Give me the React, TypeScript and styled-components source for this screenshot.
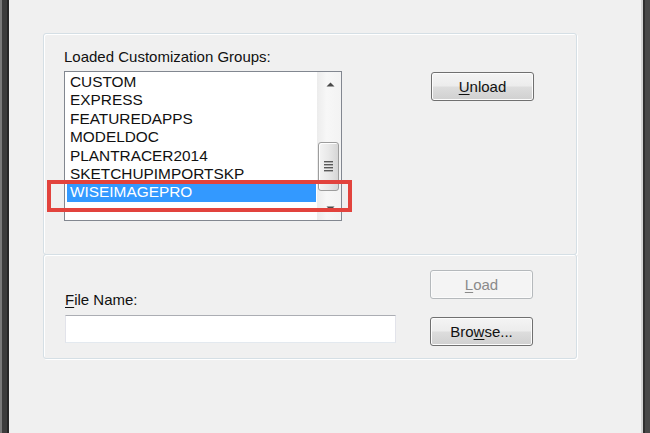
import React from "react";
import styled, { createGlobalStyle } from "styled-components";

const GlobalStyle = createGlobalStyle`
  html, body {
    margin: 0;
    padding: 0;
    background: #f0f0f0;
  }
  body {
    font-family: "Liberation Sans", Arial, sans-serif;
    font-size: 15px;
    color: #000;
  }
`;

const Window = styled.div`
  display: flex;
  width: 650px;
  height: 433px;
  overflow: hidden;
  background: #f0f0f0;
`;

const LeftFrame = styled.div`
  width: 9px;
  flex: none;
  background: linear-gradient(
    to right,
    #7a7a7a 0 2px,
    #3c3c3c 2px 7px,
    #262626 7px 9px
  );
`;

const RightFrame = styled.div`
  width: 9px;
  flex: none;
  background: linear-gradient(
    to right,
    #d2d2d2 0 2px,
    #2e2e2e 2px 4px,
    #474747 4px 9px
  );
`;

const Content = styled.div`
  flex: 1;
  padding: 33px 0 0 34px;
`;

const GroupBox = styled.div<{ $height: number }>`
  box-sizing: border-box;
  width: 534px;
  height: ${(p) => p.$height}px;
  border: 1px solid #d5dfe5;
  border-radius: 3px;
  box-shadow: inset 1px 1px 0 #ffffff, 1px 1px 0 #ffffff;
  & + & {
    margin-top: -1px;
  }
`;

const TopGroup = styled(GroupBox)`
  display: flex;
  align-items: flex-start;
  padding: 14px 0 0 20px;
`;

const BottomGroup = styled(GroupBox)`
  display: flex;
  align-items: flex-end;
  padding: 0 0 12px 21px;
`;

const ListColumn = styled.div`
  display: flex;
  flex-direction: column;
  width: 278px;
`;

const Label = styled.div`
  line-height: 18px;
  height: 18px;
  white-space: nowrap;
  color: #111111;
  u {
    text-decoration-thickness: 1px;
    text-underline-offset: 2px;
  }
`;

const ListLabel = styled(Label)`
  margin-bottom: 5px;
`;

const ListWrap = styled.div`
  position: relative;
`;

const ListBox = styled.div`
  box-sizing: border-box;
  display: flex;
  width: 278px;
  height: 150px;
  border: 1px solid #828790;
  background: #ffffff;
`;

const Items = styled.div`
  flex: 1;
  padding: 1px 1px 0 2px;
  overflow: hidden;
`;

const Item = styled.div<{ $selected?: boolean }>`
  height: 18.4px;
  line-height: 18.4px;
  padding-left: 3px;
  font-size: 15.4px;
  white-space: nowrap;
  color: ${(p) => (p.$selected ? "#ffffff" : "#111111")};
  background: ${(p) => (p.$selected ? "#3399ff" : "transparent")};
`;

const ScrollBar = styled.div`
  width: 24px;
  display: flex;
  flex-direction: column;
  background: linear-gradient(to right, #ececec, #f7f7f7 40%, #f3f3f3);
`;

const ArrowButton = styled.div`
  height: 24px;
  display: flex;
  align-items: center;
  justify-content: center;
  padding-left: 2px;
  flex: none;
`;

const Track = styled.div<{ $offset: number }>`
  flex: 1;
  padding: ${(p) => p.$offset}px 2px 0 1px;
`;

const Thumb = styled.div<{ $length: number }>`
  box-sizing: border-box;
  height: ${(p) => p.$length}px;
  border: 1px solid #9d9d9d;
  border-radius: 3px;
  background: linear-gradient(to right, #f4f4f4, #e8e8e8 50%, #d6d6d6);
  box-shadow: inset 1px 1px 0 #ffffff;
  display: flex;
  align-items: center;
  justify-content: center;
`;

const Highlight = styled.div`
  position: absolute;
  left: -17px;
  top: 109px;
  width: 305px;
  height: 32px;
  box-sizing: border-box;
  border: 4px solid #e2433d;
  pointer-events: none;
`;

const ButtonColumn = styled.div<{ $gap?: number }>`
  display: flex;
  flex-direction: column;
  gap: ${(p) => p.$gap ?? 0}px;
`;

const UnloadColumn = styled(ButtonColumn)`
  margin-left: 89px;
  margin-top: 24px;
`;

const FileColumn = styled.div`
  display: flex;
  flex-direction: column;
  width: 331px;
  margin-right: 34px;
  margin-bottom: 3px;
`;

const FileLabel = styled(Label)`
  margin-bottom: 6px;
`;

const TextInput = styled.div`
  box-sizing: border-box;
  height: 28px;
  background: #ffffff;
  border: 1px solid #e2e3ea;
  border-top-color: #abadb3;
  border-bottom-color: #e3e9ef;
`;

const Button = styled.div<{ $disabled?: boolean }>`
  box-sizing: border-box;
  width: 103px;
  height: 29px;
  display: flex;
  align-items: center;
  justify-content: center;
  border-radius: 3px;
  border: 1px solid ${(p) => (p.$disabled ? "#b5b9bc" : "#707070")};
  color: ${(p) => (p.$disabled ? "#8a8a8a" : "#111111")};
  background: ${(p) =>
    p.$disabled
      ? "#f4f4f4"
      : "linear-gradient(to bottom, #f4f4f4 0%, #ececec 48%, #dddddd 52%, #d0d0d0 100%)"};
  box-shadow: inset 0 0 0 1px ${(p) => (p.$disabled ? "#fbfbfb" : "#fcfcfc")};
  u {
    text-decoration-thickness: 1px;
    text-underline-offset: 2px;
  }
`;

const UpArrow = () => (
  <svg width="9" height="5" viewBox="0 0 9 5">
    <path d="M0.5 4.5 L4.5 0.5 L8.5 4.5 Z" fill="#4a4a4a" />
  </svg>
);

const DownArrow = () => (
  <svg width="9" height="5" viewBox="0 0 9 5">
    <path d="M0.5 0.5 L4.5 4.5 L8.5 0.5 Z" fill="#4a4a4a" />
  </svg>
);

const Grip = () => (
  <svg width="9" height="11" viewBox="0 0 9 11">
    {[1, 4, 7, 10].map((y) => (
      <rect key={y} x="0" y={y - 1} width="9" height="1.4" fill="#5a5a5a" />
    ))}
  </svg>
);

const groups = [
  "CUSTOM",
  "EXPRESS",
  "FEATUREDAPPS",
  "MODELDOC",
  "PLANTRACER2014",
  "SKETCHUPIMPORTSKP",
  "WISEIMAGEPRO",
];

const selected = "WISEIMAGEPRO";

export default function App() {
  return (
    <>
      <GlobalStyle />
      <Window>
        <LeftFrame />
        <Content>
          <TopGroup $height={222}>
            <ListColumn>
              <ListLabel>Loaded Customization Groups:</ListLabel>
              <ListWrap>
                <ListBox>
                  <Items>
                    {groups.map((g) => (
                      <Item key={g} $selected={g === selected}>
                        {g}
                      </Item>
                    ))}
                  </Items>
                  <ScrollBar>
                    <ArrowButton>
                      <UpArrow />
                    </ArrowButton>
                    <Track $offset={46}>
                      <Thumb $length={49}>
                        <Grip />
                      </Thumb>
                    </Track>
                    <ArrowButton>
                      <DownArrow />
                    </ArrowButton>
                  </ScrollBar>
                </ListBox>
                <Highlight />
              </ListWrap>
            </ListColumn>
            <UnloadColumn>
              <Button>
                <span>
                  <u>U</u>nload
                </span>
              </Button>
            </UnloadColumn>
          </TopGroup>
          <BottomGroup $height={105}>
            <FileColumn>
              <FileLabel>
                <u>F</u>ile Name:
              </FileLabel>
              <TextInput />
            </FileColumn>
            <ButtonColumn $gap={18}>
              <Button $disabled>
                <span>
                  <u>L</u>oad
                </span>
              </Button>
              <Button>
                <span>
                  Bro<u>w</u>se...
                </span>
              </Button>
            </ButtonColumn>
          </BottomGroup>
        </Content>
        <RightFrame />
      </Window>
    </>
  );
}
